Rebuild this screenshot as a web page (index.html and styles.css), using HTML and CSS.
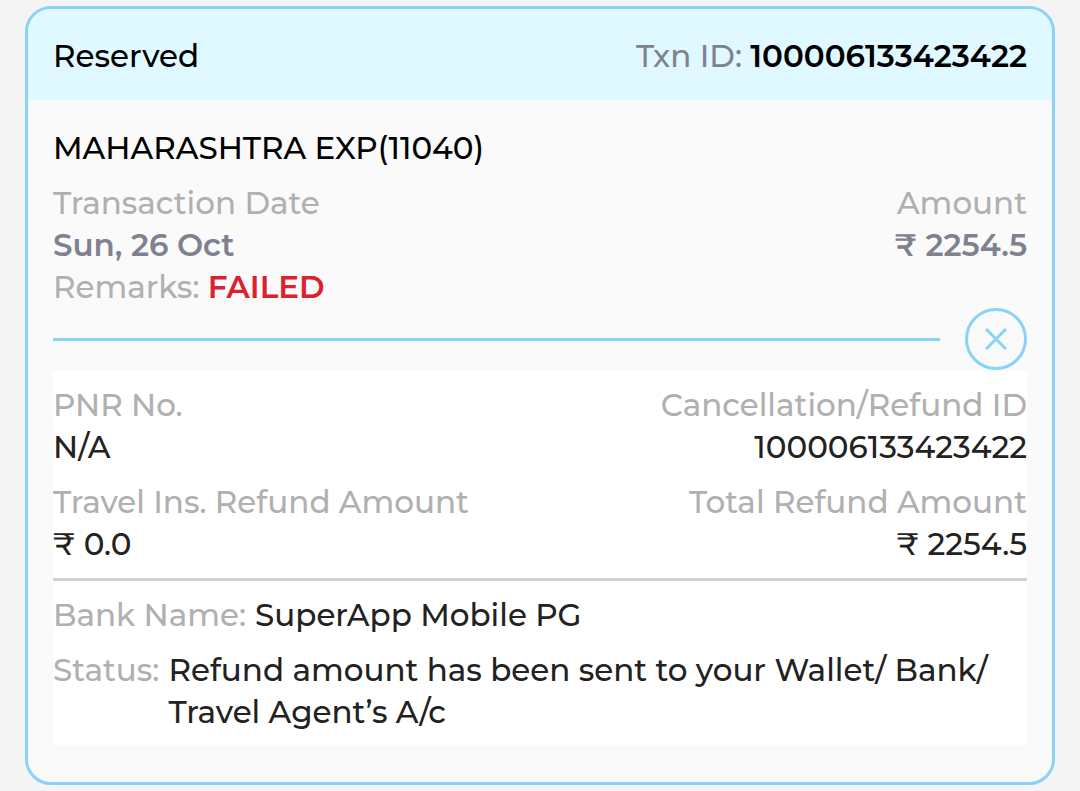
FILE: index.html
```html
<!DOCTYPE html>
<html lang="en">
<head>
    <meta charset="UTF-8">
    <meta name="viewport" content="width=device-width, initial-scale=1.0">
    <title>Refund Details</title>
    <link rel="stylesheet" href="styles.css">
</head>
<body>
    <div class="card">
        <div class="card-header row">
            <span>Reserved</span>
            <span class="txn">Txn ID: <strong>100006133423422</strong></span>
        </div>

        <div class="card-body">
            <div class="train">MAHARASHTRA EXP(11040)</div>
            <div class="row">
                <div>
                    <div class="label">Transaction Date</div>
                    <div class="summary">Sun, 26 Oct</div>
                </div>
                <div class="right">
                    <div class="label">Amount</div>
                    <div class="summary">₹ 2254.5</div>
                </div>
            </div>
            <div class="label">Remarks: <strong class="failed">FAILED</strong></div>

            <div class="toggle-row">
                <div class="line"></div>
                <button type="button" class="close" aria-label="Close details">
                    <svg width="22" height="22" viewBox="0 0 22 22">
                        <path d="M1 1L21 21M21 1L1 21" fill="none" stroke="#8ad2f7" stroke-width="3"/>
                    </svg>
                </button>
            </div>

            <div class="details">
                <div class="row">
                    <div>
                        <div class="label">PNR No.</div>
                        <div>N/A</div>
                    </div>
                    <div class="right">
                        <div class="label">Cancellation/Refund ID</div>
                        <div>100006133423422</div>
                    </div>
                </div>
                <div class="row">
                    <div>
                        <div class="label">Travel Ins. Refund Amount</div>
                        <div>₹ 0.0</div>
                    </div>
                    <div class="right">
                        <div class="label">Total Refund Amount</div>
                        <div>₹ 2254.5</div>
                    </div>
                </div>
                <hr class="divider">
                <div class="field">
                    <span class="label">Bank Name:</span>
                    <span>SuperApp Mobile PG</span>
                </div>
                <div class="field">
                    <span class="label">Status:</span>
                    <span>Refund amount has been sent to your Wallet/ Bank/ Travel Agent’s A/c</span>
                </div>
            </div>
        </div>
    </div>
</body>
</html>
```

FILE: styles.css
```css
body {
    margin: 0;
    padding: 6px 25px;
    background-color: #f4f4f4;
    font-family: Montserrat, Inter, "Liberation Sans", sans-serif;
    font-size: 31px;
    font-weight: 500;
    line-height: 42px;
    color: #000;
}

.card {
    background-color: #fafafa;
    border: 3px solid #8ad2f7;
    border-radius: 26px;
    overflow: hidden;
}

.row {
    display: flex;
    justify-content: space-between;
}

.right {
    text-align: right;
}

.card-header {
    padding: 26px 25px 23px;
    background-color: #e0f8ff;
}

.txn {
    color: #7f818f;
}

.txn strong {
    font-weight: 600;
    color: #000;
}

.card-body {
    padding: 27px 25px 37px;
}

.train {
    margin-bottom: 13px;
}

.label {
    color: #b0b0b0;
}

.summary {
    font-weight: 600;
    color: #7f818f;
}

.failed {
    font-weight: 600;
    color: #dc202e;
}

.toggle-row {
    display: flex;
    align-items: center;
    gap: 25px;
    margin-bottom: 1px;
}

.line {
    flex: 1;
    height: 3px;
    background-color: #8ad2f7;
}

.close {
    display: flex;
    align-items: center;
    justify-content: center;
    width: 62px;
    height: 62px;
    padding: 0;
    border: 3px solid #8ad2f7;
    border-radius: 50%;
    background: none;
    cursor: pointer;
}

.details {
    display: flex;
    flex-direction: column;
    gap: 13px;
    padding: 13px 0 12px;
    background-color: #fff;
    color: #222;
}

.divider {
    width: 100%;
    height: 3px;
    margin: 0;
    border: none;
    background-color: #d2d2d2;
}

.field {
    display: flex;
    gap: 9px;
}
```
